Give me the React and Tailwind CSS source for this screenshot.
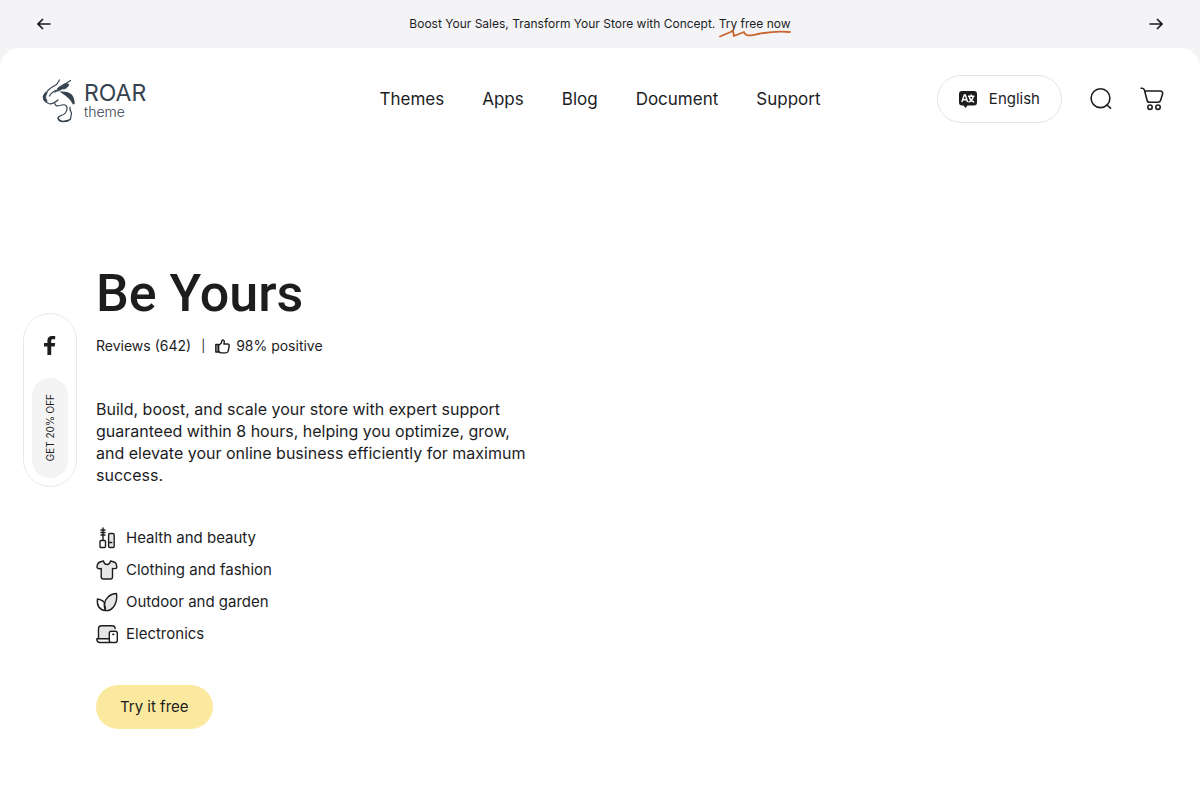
import React from 'react'

const navItems = ['Themes', 'Apps', 'Blog', 'Document', 'Support']

function ArrowIcon({ className }) {
  return (
    <svg className={className} width="14" height="12" viewBox="0 0 14 12" fill="none" stroke="currentColor" strokeWidth="1.7" aria-hidden="true">
      <path d="M0.5 6H13M8 1l5 5-5 5" />
    </svg>
  )
}

function LionMark() {
  return (
    <svg width="34" height="46" viewBox="0 0 34 46" fill="none" stroke="#36434f" strokeWidth="1.2" strokeLinecap="round" aria-hidden="true">
      <path d="M17.500 2 14.500 6.500C9 9.500 6 11 4.500 14.500L1.500 18C0.800 21 2.500 23.500 6.500 25.500 9.500 26.800 13 24.500 16 22" />
      <path d="M3.500 14.500C.8 17.500 .8 21.500 4.500 24.500L5 22.500C3.200 20.500 3.200 18 5 15Z" fill="#36434f" strokeWidth="0.800" />
      <path d="M28.500 2.500 24 5.500C21 6.500 19 8 16 10.500" />
      <path d="M13 14C16 11 17 8 20.500 8.500 21 5.500 25 5 27 6.500 25.500 10 22.500 11.500 20.500 10.800 18 12.500 15.500 13 13 14Z" fill="#36434f" strokeWidth="0.800" />
      <path d="M13.500 12.500C11 14 9 15 7.500 18" />
      <path d="M20.500 14.500C27 14.500 31.800 18 31.800 26 29.500 21.500 26 18 20.500 14.500Z" fill="#36434f" strokeWidth="1.800" />
      <path d="M13 25.500C13 27.500 15 28.500 18 27.500 22 26 25.500 26.500 25 31 24.500 34 22.500 36.500 20 37L16.500 39C15.500 42 18 43.500 21 43.500 25 43.500 27 42.500 28.500 41L29.500 35C28.500 33 27.500 32 28 29" />
      <path d="M16 40C17 43.500 21 44.500 26 42.500" strokeWidth="1.600" />
    </svg>
  )
}

function TranslateIcon() {
  return (
    <svg width="18" height="17" viewBox="0 0 18 17" aria-hidden="true">
      <path d="M3 0h12a3 3 0 0 1 3 3v8.500a3 3 0 0 1-3 3H8.500L6.500 17l-2-2.500H3a3 3 0 0 1-3-3V3a3 3 0 0 1 3-3z" fill="#1c1d1f" />
      <path d="M2.800 11 5.300 4h1l2.300 7M3.800 8.800h4M9 5.300h6.500M12.200 3.500v1.800M10.200 6c.7 2.400 2.500 4.300 5 5.200M14.200 6c-.7 2.400-2.300 4.300-4.700 5.200" fill="none" stroke="#fff" strokeWidth="1.400" />
    </svg>
  )
}

function SearchIcon() {
  return (
    <svg width="22" height="22" viewBox="0 0 22 22" fill="none" stroke="currentColor" strokeWidth="1.600" aria-hidden="true">
      <circle cx="10.500" cy="10.200" r="9.400" />
      <path d="M16.500 16.500 21 20.700" />
    </svg>
  )
}

function CartIcon() {
  return (
    <svg width="24" height="24" viewBox="0 0 24 24" fill="none" stroke="currentColor" strokeWidth="1.600" strokeLinejoin="round" aria-hidden="true">
      <path d="M0.500 1.200H2.200C3.600 1.200 4.100 2 4.500 3.200L7 13C7.300 14.500 8 15.200 9.500 15.200H18C19.500 15.200 20.200 14.500 20.600 13.200L22.500 7.200C23 5.200 22 4 20.400 4H5" />
      <circle cx="10" cy="20.200" r="2.200" />
      <circle cx="18" cy="20.200" r="2.200" />
    </svg>
  )
}

function ThumbIcon() {
  return (
    <svg width="15" height="15" viewBox="0 0 15 15" fill="none" stroke="currentColor" strokeWidth="1.400" strokeLinejoin="round" aria-hidden="true">
      <path d="M0.800 5.500H3.500V13H0.800Z" fill="#aaa" />
      <path d="M3.500 6.500 6.200 4.200 7 1.500C7.400.7 9.400.8 9.300 2.700L8.900 5H12.500C13.700 5 14.400 5.800 14.200 6.900L13.200 12C13 13.200 12.200 13.900 11 13.900H6.500C5.300 13.900 4.500 13 3.500 12.500Z" />
    </svg>
  )
}

function FacebookIcon() {
  return (
    <svg width="12" height="19" viewBox="0 0 12 19" fill="#1c1d1f" aria-hidden="true">
      <path d="M3.400 19V10.500H0V6.900H3.400V4.600C3.400 1.600 5.100 0 8 0H11.200V3.300H9C7.600 3.300 7.200 3.900 7.200 5V6.900H11.200L10.700 10.500H7.200V19Z" />
    </svg>
  )
}

const iconProps = {
  width: 22,
  height: 22,
  viewBox: '0 0 22 22',
  fill: 'none',
  stroke: '#1c1d1f',
  strokeWidth: 1.4,
  strokeLinecap: 'round',
  strokeLinejoin: 'round',
  'aria-hidden': true
}

function BeautyIcon() {
  return (
    <svg {...iconProps}>
      <path d="M7 1v12M5 3h4M5 5.500h4M5 8h4" />
      <rect x="4" y="13.500" width="5.500" height="7" rx="1" />
      <path d="M14 6.500h2.500c1 0 1.700.7 1.700 1.700v11c0 .8-.5 1.300-1.300 1.300h-3c-.8 0-1.300-.5-1.300-1.300v-11c0-1 .6-1.700 1.400-1.700z" fill="#e6e6e6" />
      <path d="M13 15.500h2.800" />
    </svg>
  )
}

function ShirtIcon() {
  return (
    <svg {...iconProps}>
      <path d="M7.500 2C8 4.500 9.300 5.500 11 5.500S14 4.500 14.500 2L18 3C20 3.700 20.800 5.500 20.800 8.500 20.500 9.700 19 9.900 16.500 9.500V18C16.500 19.500 16 20 14.500 20H7.500C6 20 5.200 19.500 5.200 18V9.500C3 9.900 1.500 9.700 1 8.500 1 5.500 2 3.700 4 3Z" fill="#e6e6e6" />
    </svg>
  )
}

function LeafIcon() {
  return (
    <svg {...iconProps}>
      <path d="M9.500 19.500C7.500 16 8 10 11.500 6.500 14 4 17 2.500 20.500 2.500 21.200 8 20 13 17 16.500 15 19 12.500 20 9.500 19.500Z" fill="#e6e6e6" />
      <path d="M9.500 19.500C3.500 19 .5 14.500 1.500 8 5 8.500 7.800 10.200 8.800 12.500M9.500 19.500C9.500 16.500 9 14.500 8.300 13" />
    </svg>
  )
}

function DeviceIcon() {
  return (
    <svg {...iconProps}>
      <path d="M2.500 16V6C2.500 3.500 3.500 2.700 5.500 2.700H16C18 2.700 19 3.500 19.200 6L13 8.500V16Z" fill="#e6e6e6" stroke="none" />
      <path d="M2.500 15.800V6C2.500 3.500 3.500 2.700 5.500 2.700H16C18 2.700 19 3.500 19.200 5.500M13.200 15.800H.8C.8 18.500 2 19.500 4 19.500H14" />
      <rect x="13.300" y="8.200" width="8" height="11.300" rx="2" fill="#fff" />
      <path d="M17 11.300h.5" strokeWidth="1.800" />
    </svg>
  )
}

const categories = [
  { label: 'Health and beauty', Icon: BeautyIcon },
  { label: 'Clothing and fashion', Icon: ShirtIcon },
  { label: 'Outdoor and garden', Icon: LeafIcon },
  { label: 'Electronics', Icon: DeviceIcon }
]

function AnnouncementBar() {
  return (
    <div className="h-12 px-9 flex items-center justify-between">
      <button className="w-4 flex justify-center" aria-label="Previous announcement">
        <ArrowIcon className="rotate-180" />
      </button>
      <p className="text-[12px] leading-5">
        Boost Your Sales, Transform Your Store with Concept.{' '}
        <a href="#" className="relative inline-block">
          Try free now
          <svg className="absolute left-0 top-4 w-full h-2" viewBox="0 0 72 8" preserveAspectRatio="none" fill="none" stroke="#c8642d" strokeWidth="1.800" strokeLinecap="round" strokeLinejoin="round" aria-hidden="true">
            <path d="M1 6.500 14 1 15 6 25 2C27 7 31 5.500 39 4 49 2 59 1 71 2" />
          </svg>
        </a>
      </p>
      <button className="w-4 flex justify-center" aria-label="Next announcement">
        <ArrowIcon />
      </button>
    </div>
  )
}

function Header() {
  return (
    <header className="h-[102px] px-9 grid grid-cols-[1fr_auto_1fr] items-center">
      <a href="#" className="flex items-center gap-2 pl-1.5 pt-1 text-[#36434f]" aria-label="Roar theme">
        <LionMark />
        <span className="flex flex-col">
          <span className="text-[23px] leading-[22px]">ROAR</span>
          <span className="text-[14px] leading-4 font-light">theme</span>
        </span>
      </a>
      <nav className="flex gap-[38px] text-[17px] leading-6">
        {navItems.map(item => (
          <a key={item} href="#">{item}</a>
        ))}
      </nav>
      <div className="flex items-center justify-end">
        <button className="h-12 px-[21px] flex items-center gap-3 rounded-full border border-[#e4e4e4] text-[15px]">
          <TranslateIcon />
          English
        </button>
        <button className="ml-7" aria-label="Search"><SearchIcon /></button>
        <button className="ml-7" aria-label="Cart"><CartIcon /></button>
      </div>
    </header>
  )
}

function SocialWidget() {
  return (
    <aside className="fixed left-[23px] top-1/2 -translate-y-1/2 w-[54px] h-[174px] pt-[22px] pb-2 flex flex-col items-center justify-between rounded-full border border-[#e8e8e8] bg-white">
      <a href="#" aria-label="Facebook"><FacebookIcon /></a>
      <button className="w-9 h-[100px] flex items-center justify-center rounded-full bg-[#f4f4f4]">
        <span className="rotate-180 [writing-mode:vertical-rl] whitespace-nowrap text-[10px] leading-4">GET 20% OFF</span>
      </button>
    </aside>
  )
}

export default function App() {
  return (
    <div className="min-h-screen flex flex-col bg-[#f4f4f7] font-['Inter',sans-serif] text-[#1c1d1f]">
      <AnnouncementBar />
      <div className="grow rounded-t-[20px] bg-white">
        <Header />
        <main className="px-24 pt-28 pb-[71px]">
          <h1 className="font-['Roboto',sans-serif] text-[52px] leading-[64px] font-medium">Be Yours</h1>
          <div className="mt-2 flex items-center text-[14px] leading-6">
            <span>Reviews (642)</span>
            <span className="mx-2.5 text-[12px]">|</span>
            <ThumbIcon />
            <span className="ml-1.5">98% positive</span>
          </div>
          <p className="mt-10 max-w-[444px] text-[16px] leading-[22px]">
            Build, boost, and scale your store with expert support guaranteed within 8 hours, helping you optimize, grow, and elevate your online business efficiently for maximum success.
          </p>
          <ul className="mt-10 flex flex-col gap-2 text-[15px] leading-6">
            {categories.map(({ label, Icon }) => (
              <li key={label} className="flex items-center gap-2">
                <Icon />
                {label}
              </li>
            ))}
          </ul>
          <button className="mt-[39px] h-11 px-6 rounded-full bg-[#fae99f] text-[15px]">Try it free</button>
        </main>
      </div>
      <SocialWidget />
    </div>
  )
}
